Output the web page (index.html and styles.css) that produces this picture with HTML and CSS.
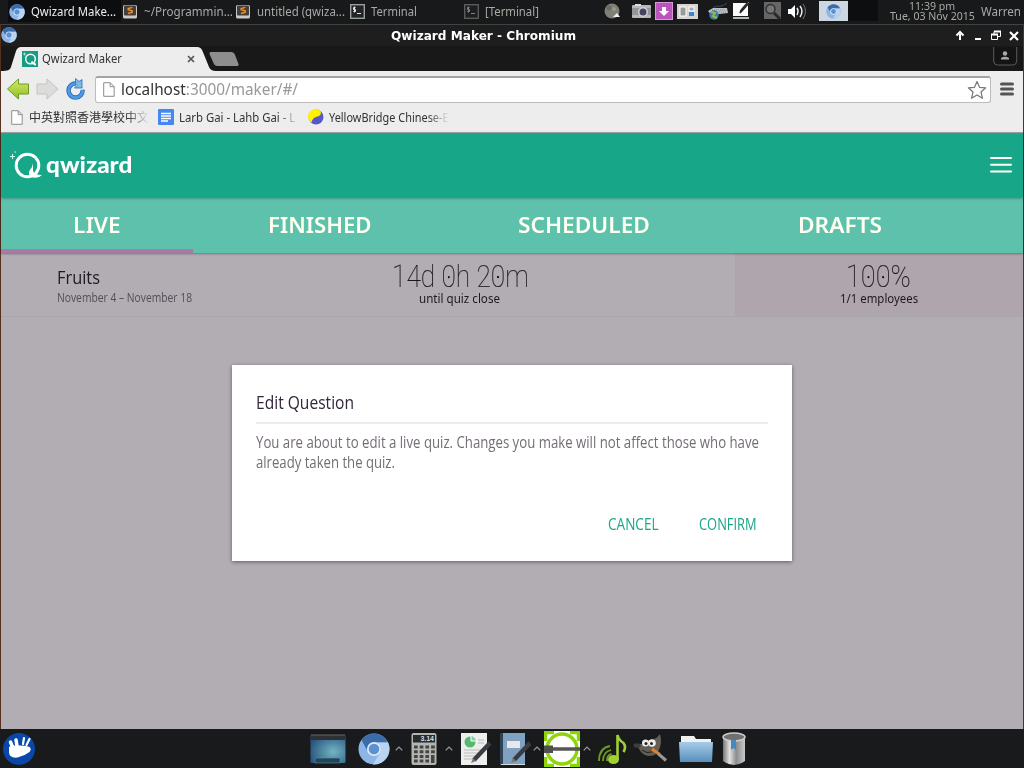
FILE: index.html
```html
<!DOCTYPE html>
<html lang="en">
<head>
<meta charset="utf-8">
<title>Qwizard Maker</title>
<link rel="stylesheet" href="styles.css">
</head>
<body>
<svg class="defs" width="0" height="0">
  <defs>
    <linearGradient id="green" x1="0" y1="0" x2="0" y2="1"><stop offset="0" stop-color="#d4ea6a"/><stop offset="1" stop-color="#8dbf22"/></linearGradient>
    <linearGradient id="folder" x1="0" y1="0" x2="0" y2="1"><stop offset="0" stop-color="#a6cbe8"/><stop offset="1" stop-color="#5990bd"/></linearGradient>
    <linearGradient id="metal" x1="0" y1="0" x2="1" y2="0"><stop offset="0" stop-color="#777"/><stop offset=".3" stop-color="#e2e2e2"/><stop offset=".6" stop-color="#8d8d8d"/><stop offset="1" stop-color="#c9c9c9"/></linearGradient>
    <radialGradient id="screen" cx=".65" cy=".6" r=".7"><stop offset="0" stop-color="#72b4c4"/><stop offset="1" stop-color="#28547e"/></radialGradient>
    <symbol id="chromium" viewBox="0 0 32 32">
      <circle cx="16" cy="16" r="15.5" fill="#8db5e6"/>
      <path d="M3.500 7A15.5 15.5 0 0 1 30 9.500H16A7 7 0 0 0 9.500 18Z" fill="#396ca8"/>
      <path d="M30 9.500A15.500 15.500 0 0 1 15 31.500L22.500 19A7 7 0 0 0 19 9.500Z" fill="#b9d4f1"/>
      <circle cx="16" cy="16" r="7" fill="#dfebfa"/><circle cx="16" cy="16" r="5.300" fill="#5b90d2"/>
    </symbol>
    <symbol id="sublime" viewBox="0 0 14 14">
      <rect width="14" height="13.500" rx="1.500" fill="#c9c9c9"/><rect x="1" y="0.500" width="12" height="10" rx="1" fill="#443f3b"/>
      <path d="M9.300 2.300 5.200 3.500v1.300l4 1v1.400L5 8.500" fill="none" stroke="#f2912c" stroke-width="1.400"/>
    </symbol>
    <symbol id="term" viewBox="0 0 15 15">
      <rect x=".7" y=".7" width="13.600" height="13.600" fill="#232628" stroke="#a6a8a6" stroke-width="1.300"/>
      <path d="M5.500 3.500H3.500v2h2v2h-2.200M4.500 2.500v6M7 9.500h4" fill="none" stroke="#e4e4e4"/>
    </symbol>
    <symbol id="page" viewBox="0 0 12 15"><path d="M.7.7h6.500l4 4v9.600H.7ZM7.200.7v4h4" fill="#fdfdfd" stroke="#8e8e8e"/></symbol>
    <symbol id="caret" viewBox="0 0 8 5"><path d="M.7 4.300 4 1l3.300 3.300" fill="none" stroke="#9a9da0" stroke-width="1.200"/></symbol>
  </defs>
</svg>

<header class="panel">
  <div class="task task-active"><svg class="i16"><use href="#chromium"/></svg><span class="t k945">Qwizard Make...</span></div>
  <div class="task"><svg class="i14"><use href="#sublime"/></svg><span class="t k967">~/Programmin...</span></div>
  <div class="task"><svg class="i14"><use href="#sublime"/></svg><span class="t k951">untitled (qwiza...</span></div>
  <div class="task task-term"><svg class="i15"><use href="#term"/></svg><span class="t k936">Terminal</span></div>
  <div class="task task-term"><svg class="i15 dim"><use href="#term"/></svg><span class="t k945">[Terminal]</span></div>
  <svg class="tray" viewBox="0 0 220 24">
    <circle cx="12" cy="11" r="7.500" fill="#7f7f76"/><circle cx="9" cy="8" r="2.500" fill="#6a6a62"/><circle cx="14" cy="9" r="2" fill="#98988e"/><path d="M13 17l4-4 3 4Z" fill="#f2f2f2"/>
    <rect x="32" y="5" width="19" height="13" rx="1" fill="#b8b8b8"/><rect x="35" y="4" width="6" height="2" fill="#ddd"/><rect x="32" y="8" width="19" height="7" fill="#969696"/><circle cx="43" cy="12" r="5" fill="#d2d2d2"/><circle cx="43" cy="12" r="3.500" fill="#45445e"/>
    <rect x="55.500" y="2.500" width="17" height="17" fill="#ba55bb" stroke="#dd93dd"/><path d="M62 7h4v4h3l-5 5-5-5h3Z" fill="#fff"/>
    <rect x="77" y="4" width="21" height="15" fill="#d4d4d4"/><rect x="80" y="7" width="6" height="9" fill="#999" stroke="#fff"/><rect x="89" y="7" width="5" height="4" fill="#aaa" stroke="#fff"/><rect x="89" y="12" width="5" height="4" fill="#3984d2"/>
    <path d="M108 11 113 8h14l1 5-17 2Z" fill="#bdc0c2"/><path d="M114 8c0-4 6 1 13-5" stroke="#35516e" fill="none"/><path d="M112 10h14M111 12h15" stroke="#888" stroke-dasharray="1 1"/><circle cx="114" cy="15" r="4.700" fill="#3f7ab3"/><path d="M111 12l4 1-2 3 4 2" stroke="#8fbc46" stroke-width="2" fill="none"/>
    <rect x="133" y="3" width="15" height="13" fill="#fafafa"/><path d="M133 18h16" stroke="#eee" stroke-width="1.500"/><path d="m150 2-8 9-2 2 1-3 7-8" fill="#fff" stroke="#222" stroke-width="1.300"/>
    <rect x="164" y="2" width="17" height="17" fill="#666"/><circle cx="170.500" cy="9" r="4.500" fill="#767676" stroke="#333" stroke-width="1.500"/><path d="m174 13 6 6" stroke="#292929" stroke-width="3"/>
    <path d="M188 9h3l4-4v13l-4-4h-3Z" fill="#fff"/><path d="M197 8q2 3 0 7M200 6q4 5 0 11" fill="none" stroke="#eee" stroke-width="1.500"/><path d="M203 4q5 7 0 15" fill="none" stroke="#777"/>
  </svg>
  <div class="pager"><svg class="i15"><use href="#chromium"/></svg></div>
  <div class="pager-empty"></div>
  <div class="clock"><span class="t time k920">11:39 pm</span><span class="t k920">Tue, 03 Nov 2015</span></div>
  <div class="user"><span class="t k963">Warren</span></div>
</header>

<main class="window">
  <div class="titlebar">
    <svg class="i16"><use href="#chromium"/></svg>
    <span class="t wtitle k1009">Qwizard Maker - Chromium</span>
    <svg class="wbtns" viewBox="0 0 66 20"><path d="M7 15V9M3.500 10.500 7 7l3.500 3.500" fill="none" stroke="#fff" stroke-width="2"/><path d="M22 14h6" stroke="#fff" stroke-width="2"/><path d="M38.500 9.500h6v5h-6ZM41 9V6.500h6.500v5H45" fill="none" stroke="#fff"/><path d="M38 9.500h7M41 6.500h7" stroke="#fff" stroke-width="2"/><path d="m57 7 8 8m0-8-8 8" stroke="#fff" stroke-width="2.200"/></svg>
  </div>
  <div class="tabstrip">
    <svg class="tabshape" viewBox="0 0 242 25"><path d="M0 25C7 25 9 24 10 21L15 5Q16.500 1 20 1H196Q200 1 201.500 5L208 21Q209.500 25 215 25Z" fill="#ededed"/><path d="M210 6h20q3 0 4 3l3.500 9q.5 2-2 2h-19q-3 0-4-3l-4-9Q208 6 210 6Z" fill="#8e8e8e"/></svg>
    <div class="tabinfo">
      <svg class="i16" viewBox="0 0 16 16"><rect width="16" height="16" fill="#169c80"/><circle cx="8.500" cy="8" r="4.800" fill="none" stroke="#fff" stroke-width="1.500"/><path d="M9.500 10.500q2 3 4.500 3" stroke="#fff" stroke-width="1.800" fill="none"/><path d="M2.500 1.500v3M1 3h3" stroke="#9edccc"/></svg>
      <span class="t k938">Qwizard Maker</span>
      <svg class="close" viewBox="0 0 8 8"><path d="m1 1 6 6m0-6-6 6" stroke="#555" stroke-width="1.700"/></svg>
    </div>
    <svg class="person" viewBox="0 0 25 20"><path d="M.7 0v14q0 4 4 4h15q4 0 4-4V0" fill="#141414" stroke="#5a5a5a"/><circle cx="12" cy="6.500" r="2.200" fill="#aaa"/><path d="M8 12.500v-1.500q4-2.500 8 0v1.500Z" fill="#aaa"/></svg>
  </div>
  <div class="toolbar">
    <svg class="nav" viewBox="0 0 84 24"><path d="M6.500 12 17.500 2v5h10v10h-10v5Z" fill="url(#green)" stroke="#6f9a22"/><path d="M57 12 46 2v5H36v10h10v5Z" fill="#dcdcda" stroke="#c2c2c0"/><path d="M75 6.600A7 7 0 1 0 81.500 13" fill="none" stroke="#2b6ab6" stroke-width="4.500"/><path d="M75 6.600A7 7 0 1 0 81.500 12.500" fill="none" stroke="#4d9be4" stroke-width="2.800"/><path d="M74.500 1.500 78 4.500 81 2.500V11H73.500L76 8.500 74.500 7Z" fill="#77bce9" stroke="#2e70b5" stroke-width=".8"/></svg>
    <div class="omnibox"><svg class="pageicon"><use href="#page"/></svg><span class="t url k958">localhost<span class="faint">:3000/maker/#/</span></span>
      <svg class="star" viewBox="0 0 20 20"><path d="m10 1.500 2.500 5.800 6.200.5-4.700 4.200 1.500 6.300-5.500-3.400-5.500 3.400L6 12 1.300 7.800l6.200-.5Z" fill="#fff" stroke="#777" stroke-width="1.200" stroke-linejoin="round"/></svg></div>
    <svg class="menu" viewBox="0 0 14 14"><path d="M1.500 2h11M1.500 7h11M1.500 12h11" stroke="#555" stroke-width="3" stroke-linecap="round"/></svg>
  </div>
  <div class="bookmarks">
    <div class="bm bm1"><svg class="pageicon"><use href="#page"/></svg><span class="fade"><span class="t">中英對照香港學校中文</span></span></div>
    <div class="bm bm2"><svg class="i16" viewBox="0 0 16 16"><rect width="16" height="16" rx="1" fill="#4688f1"/><path d="M3 4.500h10M3 7h10M3 9.500h10M3 12h7" stroke="#fff" stroke-width="1.300"/></svg><span class="fade"><span class="t k945">Larb Gai - Lahb Gai - L</span></span></div>
    <div class="bm bm3"><svg class="i16" viewBox="0 0 16 16"><circle cx="8" cy="8" r="7.500" fill="#5657c8"/><path d="M.5 10A7.500 7.500 0 0 1 12.500 2Q14 6.500 9.500 7.500 4.500 8.500 3.500 13.500 1 12 .5 10Z" fill="#fff100"/></svg><span class="fade"><span class="t k910">YellowBridge Chinese-E</span></span></div>
  </div>

  <div class="app">
    <div class="appbar">
      <svg class="logo" viewBox="0 0 34 32"><circle cx="17.500" cy="17.500" r="11.300" fill="none" stroke="#fff" stroke-width="3"/><path d="M23 15v8q1 4 9 4-3 3.500-9 2.500-4.500-1-4-5.500 1-3 2.500-4 1-2 1.500-5Z" fill="#fff"/><path d="M2.500 6v5M0 8.500h5M4.500 4h1.500" stroke="#d9fff5"/></svg>
      <span class="t brand">qwizard</span>
      <svg class="burger" viewBox="0 0 22 18"><path d="M1 2h20M1 8.800h20M1 15.500h20" stroke="#fffff2" stroke-width="2" stroke-linecap="round"/></svg>
    </div>
    <nav class="tabs">
      <div class="tab tab-live"><span class="t k1031">LIVE</span></div>
      <div class="tab tab-fin"><span class="t k1009">FINISHED</span></div>
      <div class="tab tab-sch"><span class="t k1031">SCHEDULED</span></div>
      <div class="tab tab-dra"><span class="t k1031">DRAFTS</span></div>
    </nav>
    <section class="content">
      <div class="quiz">
        <div class="quiz-name"><span class="t name k910">Fruits</span><span class="t dates k859">November 4 – November 18</span></div>
        <div class="quiz-time"><span class="t big k821">14d <i class="z">0</i>h 2<i class="z">0</i>m</span><span class="t small k967">until quiz close</span></div>
        <div class="quiz-rate"><span class="t big k845">1<i class="z">0</i><i class="z">0</i>%</span><span class="t small k951">1/1 employees</span></div>
      </div>
      <div class="dialog">
        <h2 class="dlg-title"><span class="t k866">Edit Question</span></h2>
        <p class="dlg-text"><span class="t k825">You are about to edit a live quiz. Changes you make will not affect those who have</span><span class="t k821">already taken the quiz.</span></p>
        <div class="dlg-actions"><span class="t k845">CANCEL</span><span class="t k805">CONFIRM</span></div>
      </div>
    </section>
  </div>
</main>

<footer class="dock">
  <svg class="start" viewBox="0 0 36 36"><circle cx="17" cy="18" r="16" fill="#0a47a9"/><path d="M7 16q1.500-2 8.500-1.500 6-.5 11 1 4 2 1 5.500-5 4-12 5.500-8 1-8.500-5Z" fill="#fff"/><path d="m10.500 16-2-5M15 15l-1-6" stroke="#fff" stroke-width="3.500" stroke-linecap="round"/><path d="m21 13 1-6M24.500 14l3-6" stroke="#fff" stroke-width="2.200" stroke-linecap="round"/></svg>
  <svg class="desk" viewBox="0 0 36 32"><rect x=".5" y="2" width="35" height="28" rx="1" fill="url(#screen)"/><path d="M1 4.500h34" stroke="#2e3133" stroke-width="5"/><path d="M1 2h34" stroke="#666"/><path d="M5 30v-5h25v5Z" fill="#244458" stroke="#5f96a8" stroke-width=".6"/></svg>
  <svg class="i32"><use href="#chromium"/></svg>
  <svg class="caret caret-wide"><use href="#caret"/></svg>
  <svg class="calc" viewBox="0 0 26 34"><rect x=".5" y="1" width="25" height="32" rx="2" fill="#b4b4b1"/><rect x="2" y="3" width="22" height="7.500" fill="#262b2d"/><text class="lcd" x="23" y="9.300">3.14</text><path d="M3 15h21M3 19.700h21M3 24.400h15M3 29h15" stroke="#444" stroke-width="3" stroke-dasharray="3.700 2"/><rect x="20" y="23" width="3.500" height="8" fill="#444"/></svg>
  <svg class="caret caret-calc"><use href="#caret"/></svg>
  <svg class="doc" viewBox="0 0 32 34"><rect x="1" y="1" width="26" height="32" fill="#eeeeec"/><circle cx="10" cy="10" r="5.500" fill="#54b971"/><path d="M11 3v6h6Q16 4 11 3" fill="#8bd0a2" stroke="#fff"/><path d="M18 8h6M18 11h6M4 18h19M4 21h18M4 24h15M4 27h12" stroke="#bbb"/><path d="M14 28 30 11" stroke="#393c40" stroke-width="4.500"/><path d="m11 31 2-5 3 3Z" fill="#777"/></svg>
  <svg class="book" viewBox="0 0 32 34"><rect x="1" y="1" width="25" height="32" fill="#7fa2c3"/><path d="M2.500 1v32" stroke="#2f4455" stroke-width="3"/><rect x="8" y="9" width="13" height="7" fill="#e8e8e8"/><path d="M2 32.500h24" stroke="#dadada"/><path d="M15 28 31 11" stroke="#393c40" stroke-width="4.500"/><path d="m12 31 2-5 3 3Z" fill="#777"/></svg>
  <svg class="caret caret-book"><use href="#caret"/></svg>
  <svg class="ring" viewBox="0 0 36 36"><rect width="36" height="36" fill="#fff"/><path d="M1.500 10V1.500H10M26 1.500h8.500V10M1.500 26v8.500H10M26 34.500h8.500V26" fill="none" stroke="#8bd408" stroke-width="3.500"/><circle cx="18" cy="18" r="15" fill="none" stroke="#8ed60b" stroke-width="3.500"/><path d="M8 18h28" stroke="#555" stroke-width="3.500"/><rect y="14.500" width="9" height="7.500" fill="#505050"/></svg>
  <svg class="caret caret-ring"><use href="#caret"/></svg>
  <svg class="music" viewBox="0 0 30 34"><ellipse cx="16.500" cy="27.500" rx="5.500" ry="4.500" fill="#a2cf35"/><path d="M20.500 28V3q1 5 6 8 3 4 0 9" fill="none" stroke="#a2cf35" stroke-width="2.600"/><path d="M13 14q-11 2-11 15M14 18q-8 2-8 11M14.500 22q-4.500 1-4.500 7" fill="none" stroke="#719a22" stroke-width="1.800"/></svg>
  <svg class="gimp" viewBox="0 0 36 32"><path d="M3 11q8 1 12-4 7 1 12-6 2 8 0 13-2 9-11 9-4 0-8-4Z" fill="#625e55"/><ellipse cx="4" cy="12.500" rx="3.500" ry="2.300" fill="#3c3c3c"/><circle cx="12.500" cy="10" r="3.500" fill="#eee"/><circle cx="19" cy="10" r="3.800" fill="#eee"/><circle cx="13" cy="10.500" r="1.500" fill="#222"/><circle cx="18.500" cy="10.500" r="1.500" fill="#222"/><path d="m19 16 7 5" stroke="#e0822a" stroke-width="3"/><path d="m25 20.500 8 7" stroke="#999" stroke-width="3"/><path d="M9 17q5 4 10 2" stroke="#222" fill="none"/></svg>
  <svg class="folder" viewBox="0 0 34 30"><path d="M2 2h13l2 3h15v9H2Z" fill="#f0f0f0"/><path d="M0 8h34l-1 20H1Z" fill="url(#folder)"/></svg>
  <svg class="trash" viewBox="0 0 24 34"><path d="M1 4v25q11 8 22 0V4Z" fill="url(#metal)"/><ellipse cx="12" cy="5" rx="11" ry="4" fill="#707070" stroke="#ccc" stroke-width="1.500"/><path d="M9 8h5v10l-2.500-2L9 18Z" fill="#4788bd"/></svg>
</footer>
</body>
</html>
```
FILE: styles.css
```css
* { box-sizing: border-box; }
body { margin: 0; width: 1024px; height: 768px; overflow: hidden; background: #181a1b; font-family: "Noto Sans", "Noto Sans CJK TC", sans-serif; font-size: 12px; display: flex; flex-direction: column; }
svg { display: block; flex: none; }
.defs { position: absolute; }

/* Text runs, with horizontal condensing factors */
.t { display: block; width: max-content; flex: none; white-space: nowrap; transform-origin: 0 50%; transform: scaleX(var(--k, 1)); }
.k805 { --k: .805; }
.k821 { --k: .821; }
.k825 { --k: .825; }
.k845 { --k: .848; }
.k859 { --k: .859; }
.k866 { --k: .866; }
.k910 { --k: .91; }
.k920 { --k: .92; }
.k936 { --k: .936; }
.k938 { --k: .938; }
.k945 { --k: .945; }
.k951 { --k: .951; }
.k958 { --k: .958; }
.k963 { --k: .963; }
.k967 { --k: .967; }
.k1009 { --k: 1.009; }
.k1031 { --k: 1.031; }

.i14 { width: 14px; height: 14px; }
.i15 { width: 15px; height: 15px; }
.i16 { width: 16px; height: 16px; }
.i32 { width: 32px; height: 32px; margin-left: 12px; }
.dim { opacity: .5; }

/* Desktop panel */
.panel { height: 24px; flex: none; display: grid; grid-template-columns: 8px 113px 113px 114px 114px 138px 219px 29px 30px 12px 91px 43px; background: #17191b; color: #a8aaa5; line-height: 24px; }
.task { display: flex; align-items: center; gap: 7px; padding: 1px 0 0 2px; height: 22px; }
.task-term { gap: 6px; }
.task-active { grid-column: 2; background: #0c0d0e; color: #eee; gap: 6px; padding: 2px 0 0 1px; }
.tray { width: 220px; height: 24px; }
.pager { background: #ccd7e2; height: 20px; margin-top: 1px; padding: 3px 7px; }
.pager-empty { background: #0d0e0f; height: 21px; }
.clock { grid-column: 11; line-height: 10px; padding-top: 1px; font-size: 11.500px; }
.clock .time { margin-left: 19px; }

/* Browser window */
.window { height: 705px; flex: none; border: solid #54301f; border-width: 0 1px; display: flex; flex-direction: column; }
.titlebar { height: 22px; flex: none; display: flex; background: #1e1e1e; border-top: 1px solid #424242; padding-top: 2px; }
.wtitle { color: #fff; font: bold 12px/19px "DejaVu Sans", sans-serif; margin-left: 374px; }
.wbtns { width: 66px; height: 20px; margin: -2px 4px 0 auto; }
.tabstrip { height: 25px; flex: none; background: #181818; display: grid; grid-template-columns: 242px 1fr 30px; }
.tabshape { width: 242px; height: 25px; grid-area: 1 / 1; }
.tabinfo { grid-area: 1 / 1; display: flex; align-items: center; padding-left: 21px; color: #333; z-index: 1; }
.tabinfo .t { width: 80px; margin-left: 4px; }
.close { width: 8px; height: 8px; margin-left: 65px; }
.person { width: 25px; height: 20px; grid-column: 3; margin-top: 1px; }
.toolbar { height: 35px; flex: none; display: flex; background: #ededed; padding-top: 5px; }
.nav { width: 84px; height: 24px; margin-top: 1px; }
.omnibox { width: 896px; height: 27px; margin-left: 10px; display: flex; align-items: center; border: 1px solid #bcbcbc; border-top: 2px solid #a4a4a4; border-radius: 3px; background: #fff; padding: 0 3px 1px 7px; }
.pageicon { width: 12px; height: 15px; }
.url { font-size: 16px; line-height: 24px; margin: -2px 0 0 6px; color: #333; }
.faint { color: #999; }
.star { width: 20px; height: 20px; margin-left: auto; }
.menu { width: 14px; height: 14px; margin: 6px 0 0 9px; }
.bookmarks { height: 27px; flex: none; display: grid; grid-template-columns: 147px 150px 150px; background: #ededed; color: #333; border-bottom: 1px solid #aaa; padding: 0 0 4px 10px; }
.bm { display: flex; align-items: center; }
.fade { width: 120px; overflow: hidden; -webkit-mask-image: linear-gradient(90deg, #000 82%, transparent); mask-image: linear-gradient(90deg, #000 82%, transparent); }
.bm1 .fade { margin-left: 6px; }
.bm2 .fade, .bm3 .fade { margin-left: 5px; }

/* Quiz app */
.app { flex: 1; display: flex; flex-direction: column; background: #b2adb3; }
.appbar { height: 64px; flex: none; background: #18a689; display: flex; padding: 15px 11px 0 9px; position: relative; box-shadow: 0 1px 3px #0006; z-index: 1; }
.logo { width: 34px; height: 32px; }
.brand { font: 900 23.500px/32px Lato, sans-serif; color: #fff; margin-left: 2px; --k: 1.035; }
.burger { width: 22px; height: 18px; margin: 8px 0 0 auto; }
.tabs { height: 56px; flex: none; background: #5ec1ac; color: #fffff0; display: grid; grid-template: 56px / 192px 250px 282px 298px; font-size: 22px; font-weight: 600; line-height: 54px; box-shadow: 0 1px 2px #0005; position: relative; }
.tab-live { padding-left: 72px; box-shadow: inset 0 -4px #a77ba5; }
.tab-fin { padding-left: 75px; }
.tab-sch { padding-left: 75px; }
.tab-dra { padding-left: 73px; }
.content { flex: 1; }
.quiz { height: 64px; display: grid; grid-template-columns: 391px 343px 288px; border-bottom: 1px solid #aba6ad; color: #1f1822; }
.quiz-name { padding: 12px 0 0 56px; }
.name { font: 18px/24px "Open Sans", sans-serif; }
.dates { font: 12px/18px "Open Sans", sans-serif; color: #544c57; }
.big { font: 100 32px/38px Roboto, sans-serif; padding-top: 4px; -webkit-text-stroke: .2px #1f1822; }
.small { font-size: 12px; line-height: 14px; margin-top: -3px; }
.quiz-time .small { margin-left: 27px; }
.quiz-rate { background: #afa5ac; }
.quiz-rate .big { margin-left: 111px; }
.quiz-rate .small { margin-left: 105px; }
.z { font-style: normal; background: radial-gradient(circle at 50% 53%, #1f1822 1px, transparent 1.500px); }

/* Confirmation dialog */
.dialog { width: 560px; height: 196px; margin: 48px 0 0 231px; background: #fff; box-shadow: 0 1px 4px #0007; padding: 24px; font-family: "Open Sans", sans-serif; }
.dlg-title { margin: 0; height: 35px; border-bottom: 2px solid #f0e9f2; font-size: 18px; font-weight: 400; line-height: 27px; color: #34263b; }
.dlg-text { margin: 8px 0 0; font-size: 16px; line-height: 20px; color: #756d76; height: 80px; }
.dlg-actions { display: grid; grid-template-columns: 91px 70px; margin-left: 352px; font-size: 16px; line-height: 24px; color: #19a689; }

/* Dock */
.dock { height: 39px; flex: none; background: #181a1b; display: flex; align-items: center; padding-left: 2px; }
.start { width: 36px; height: 36px; }
.desk { width: 36px; height: 32px; margin-left: 272px; }
.caret { width: 8px; height: 5px; }
.caret-wide { margin: 0 8px 0 5px; }
.caret-calc { margin: 0 7px 0 8px; }
.caret-book { margin: 0 3px 0 2px; }
.caret-ring { margin: 0 6px 0 3px; }
.calc { width: 26px; height: 34px; }
.lcd { font: bold 7px "Liberation Sans", sans-serif; fill: #ddd; text-anchor: end; }
.doc { width: 32px; height: 34px; }
.book { width: 32px; height: 34px; margin-left: 7px; }
.ring { width: 36px; height: 36px; }
.music { width: 30px; height: 34px; }
.gimp { width: 36px; height: 32px; margin-left: 6px; }
.folder { width: 34px; height: 30px; margin-left: 10px; }
.trash { width: 24px; height: 34px; margin-left: 9px; }
```
